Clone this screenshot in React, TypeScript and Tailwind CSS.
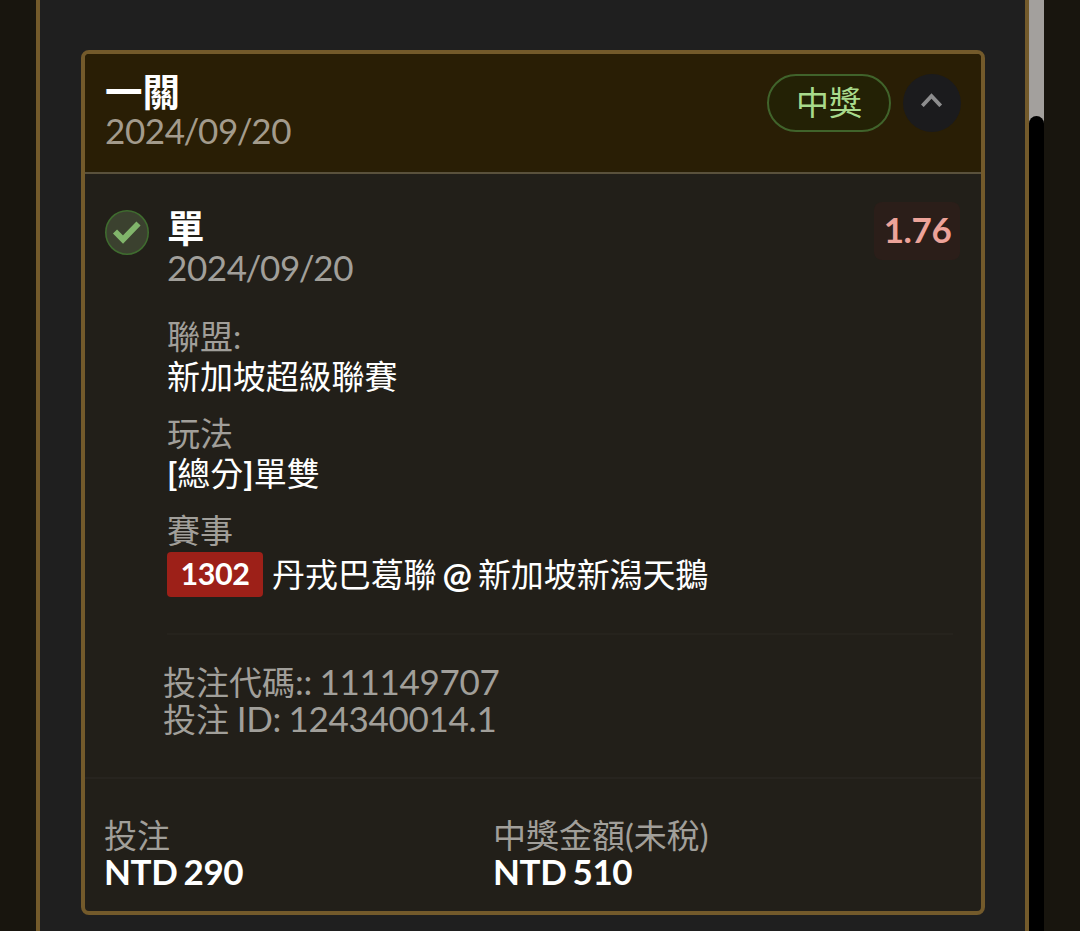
import type { ReactNode } from 'react'

type DetailProps = {
  label: string
  children: ReactNode
}

function Detail({ label, children }: DetailProps) {
  return (
    <div className="h-[97px]">
      <p className="h-10 leading-10 text-[#a19f9a]">{label}</p>
      <div className="h-10 leading-10 text-white">{children}</div>
    </div>
  )
}

function DateText({ value }: { value: string }) {
  return (
    <span className="text-[35px] tracking-[-0.4px]">
      {value.split('/').map((part, index) => (
        <span key={index}>
          {index > 0 && <span className="-mx-px">/</span>}
          {part}
        </span>
      ))}
    </span>
  )
}

function CheckBadge() {
  return (
    <svg className="mt-px h-[45px] w-[44px] shrink-0" viewBox="0 0 44 45">
      <ellipse cx="22" cy="22.5" rx="21.2" ry="21.7" fill="#3b412f" stroke="#3f6b2f" strokeWidth="1.6" />
      <path d="M10 21.5 L18 29.5 L33.5 13.5" fill="none" stroke="#81b56b" strokeWidth="5.8" />
    </svg>
  )
}

function BetHeader() {
  return (
    <header className="flex h-[120px] justify-between border-b-2 border-[#5a513c] bg-[#291e05] pt-5 pr-[20px] pl-[20px]">
      <div>
        <h2 className="h-[36px] text-[37.5px] leading-[36px] font-bold text-white">一關</h2>
        <p className="h-[40px] leading-[40px] text-[#a39b8c]">
          <DateText value="2024/09/20" />
        </p>
      </div>
      <div className="flex gap-3">
        <span className="flex h-[58px] w-[124px] items-center justify-center rounded-full border-2 border-[#40632b] bg-[#232105] text-[#a9da8c]">
          中獎
        </span>
        <button className="flex size-[58px] items-center justify-center rounded-full bg-[#1b1b1d] pb-[6px]">
          <svg className="h-[14px] w-[22px]" viewBox="0 0 22 14">
            <path d="M1.3 12.8 L10.5 3 L19.7 12.8" fill="none" stroke="#8d8d8e" strokeWidth="3.8" />
          </svg>
        </button>
      </div>
    </header>
  )
}

function BetBody() {
  return (
    <section className="flex h-[605px] border-b-2 border-[#27241f] pt-[35px] pl-5">
      <CheckBadge />
      <div className="ml-[18px] flex-1">
        <div className="flex h-[107px] justify-between">
          <div>
            <h3 className="h-[38px] text-[37.5px] leading-[38px] font-bold text-white">單</h3>
            <p className="h-10 leading-10 text-[#a19f9a]">
              <DateText value="2024/09/20" />
            </p>
          </div>
          <span className="-mt-[7px] mr-[21px] flex h-[58px] w-[86px] items-center justify-center rounded-lg bg-[#2b1e19] pb-[3px] pl-px text-[35px] font-bold tracking-[-0.4px] text-[#eda399]">
            1.76
          </span>
        </div>

        <Detail label="聯盟:">
          <span className="tracking-[-0.1px]">新加坡超級聯賽</span>
        </Detail>
        <Detail label="玩法">
          <span className="font-bold">[</span>總分<span className="font-bold">]</span>單雙
        </Detail>
        <Detail label="賽事">
          <div className="mt-px flex h-[46px] items-center tracking-[-0.1px]">
            <span className="mr-[9px] flex h-[45px] w-24 items-center justify-center rounded bg-[#9d2018] pb-[2px] text-[30.5px] font-bold tracking-[-0.4px]">
              1302
            </span>
            丹戎巴葛聯<span className="mx-[6px] text-[35px] font-bold">@</span>新加坡新潟天鵝
          </div>
        </Detail>

        <div className="mt-[26px] mr-[28px] border-t-2 border-[#26231d]" />
        <div className="-ml-[4px] pt-[28px] leading-[37px] text-[#a19f9a]">
          <p className="h-[37px]">
            投注代碼<span className="text-[35px] tracking-[-0.3px] [word-spacing:-1px]">:: 111149707</span>
          </p>
          <p className="h-[37px]">
            投注<span className="text-[35px] tracking-[-0.3px] [word-spacing:-1px]"> ID: 124340014.1</span>
          </p>
        </div>
      </div>
    </section>
  )
}

function Amount({ label, value }: { label: string; value: string }) {
  return (
    <div>
      <p className="h-[36px] leading-[37px] text-[#a19f9a]">{label}</p>
      <p className="h-[37px] text-[35px] leading-[37px] font-bold tracking-[-0.4px] text-white [word-spacing:-2px]">
        {value}
      </p>
    </div>
  )
}

export default function App() {
  return (
    <div className="flex h-[931px] w-[1080px] overflow-hidden bg-[#18150e] pl-9 font-['Lato','Noto_Sans_CJK_TC',sans-serif] text-[33px]">
      <main className="w-[993px] border-x-4 border-[#735a2b] bg-[#1f1f1f] pt-[50px] pl-[41px]">
        <article className="h-[865px] w-[904px] overflow-hidden rounded-lg border-4 border-[#735a2b] bg-[#221f19]">
          <BetHeader />
          <BetBody />
          <footer className="grid grid-cols-[389px_1fr] pt-[38px] pl-[19px]">
            <Amount label="投注" value="NTD 290" />
            <Amount label="中獎金額(未稅)" value="NTD 510" />
          </footer>
        </article>
      </main>
      {/* scrollbar */}
      <div className="w-[15px] bg-[#a3a09d] pt-[116px]">
        <div className="h-[830px] rounded-t-full bg-black" />
      </div>
    </div>
  )
}
